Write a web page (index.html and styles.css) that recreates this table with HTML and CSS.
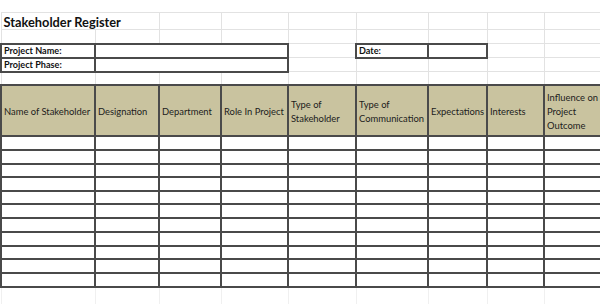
FILE: index.html
```html
<!DOCTYPE html>
<html>
<head>
<meta charset="utf-8">
<link rel="stylesheet" href="styles.css">
</head>
<body>
<table class="sheet">
  <colgroup>
    <col class="c-a"><col class="c-b"><col class="c-c"><col class="c-d"><col class="c-e"><col class="c-f"><col class="c-g"><col class="c-h"><col class="c-i">
  </colgroup>
  <tr class="r-title">
    <td colspan="2" class="title">Stakeholder Register</td><td></td><td></td><td></td><td></td><td></td><td></td><td></td>
  </tr>
  <tr class="r-gap"><td></td><td></td><td></td><td></td><td></td><td></td><td></td><td></td><td></td></tr>
  <tr class="r-info">
    <td class="box label">Project Name:</td><td colspan="3" class="box"></td><td></td><td class="box label">Date:</td><td class="box"></td><td></td><td></td>
  </tr>
  <tr class="r-info">
    <td class="box label">Project Phase:</td><td colspan="3" class="box"></td><td></td><td></td><td></td><td></td><td></td>
  </tr>
  <tr class="r-gap2"><td></td><td></td><td></td><td></td><td></td><td></td><td></td><td></td><td></td></tr>
  <tr class="r-head">
    <th>Name of Stakeholder</th>
    <th>Designation</th>
    <th>Department</th>
    <th>Role In Project</th>
    <th>Type of Stakeholder</th>
    <th>Type of Communication</th>
    <th>Expectations</th>
    <th>Interests</th>
    <th>Influence on Project Outcome</th>
  </tr>
  <tr class="r-data"><td></td><td></td><td></td><td></td><td></td><td></td><td></td><td></td><td></td></tr>
  <tr class="r-data"><td></td><td></td><td></td><td></td><td></td><td></td><td></td><td></td><td></td></tr>
  <tr class="r-data r-short"><td></td><td></td><td></td><td></td><td></td><td></td><td></td><td></td><td></td></tr>
  <tr class="r-data"><td></td><td></td><td></td><td></td><td></td><td></td><td></td><td></td><td></td></tr>
  <tr class="r-data r-short"><td></td><td></td><td></td><td></td><td></td><td></td><td></td><td></td><td></td></tr>
  <tr class="r-data"><td></td><td></td><td></td><td></td><td></td><td></td><td></td><td></td><td></td></tr>
  <tr class="r-data"><td></td><td></td><td></td><td></td><td></td><td></td><td></td><td></td><td></td></tr>
  <tr class="r-data"><td></td><td></td><td></td><td></td><td></td><td></td><td></td><td></td><td></td></tr>
  <tr class="r-data r-short"><td></td><td></td><td></td><td></td><td></td><td></td><td></td><td></td><td></td></tr>
  <tr class="r-data"><td></td><td></td><td></td><td></td><td></td><td></td><td></td><td></td><td></td></tr>
  <tr class="r-data"><td></td><td></td><td></td><td></td><td></td><td></td><td></td><td></td><td></td></tr>
  <tr class="r-fade"><td></td><td></td><td></td><td></td><td></td><td></td><td></td><td></td><td></td></tr>
</table>
</body>
</html>
```
FILE: styles.css
```css
html, body {
  margin: 0;
  padding: 0;
  background: #ffffff;
}
body {
  padding-top: 12px;
  font-family: Lato, "Liberation Sans", sans-serif;
  color: #1c1c1c;
  overflow: hidden;
}
.sheet {
  table-layout: fixed;
  border-collapse: collapse;
  width: 600px;
}
.c-a { width: 94px; }
.c-b { width: 64px; }
.c-c { width: 62px; }
.c-d { width: 67px; }
.c-e { width: 68px; }
.c-f { width: 72px; }
.c-g { width: 59px; }
.c-h { width: 57px; }
.c-i { width: 57px; }

.sheet td, .sheet th {
  border: 1px solid #e2e2e2;
  padding: 0 2px;
  white-space: nowrap;
  overflow: visible;
}
.r-title { height: 17px; }
.r-gap { height: 14px; }
.r-info { height: 14px; }
.r-gap2 { height: 13px; }
.r-head { height: 51px; }
.r-data { height: 14px; }
.r-short { height: 13px; }
.r-fade { height: 18px; }
.r-fade td {
  border-color: #f0f0f0;
  border-bottom: none;
}

.title {
  font-weight: 700;
  font-size: 12.8px;
  line-height: 14px;
  vertical-align: bottom;
  padding-left: 3px;
  color: #111111;
}
.label {
  font-weight: 700;
  font-size: 9.1px;
  line-height: 12px;
  padding-left: 3px;
  color: #111111;
}
.sheet .box {
  border: 2px solid #4a4a4a;
}
.sheet th {
  border: 2px solid #4a4a4a;
  background: #c9c39f;
  font-weight: 400;
  font-size: 9.4px;
  line-height: 14px;
  text-align: left;
  vertical-align: middle;
  white-space: normal;
  padding: 3px 1px 0 2px;
}
.sheet .r-data td {
  border: 2px solid #4a4a4a;
}
```
